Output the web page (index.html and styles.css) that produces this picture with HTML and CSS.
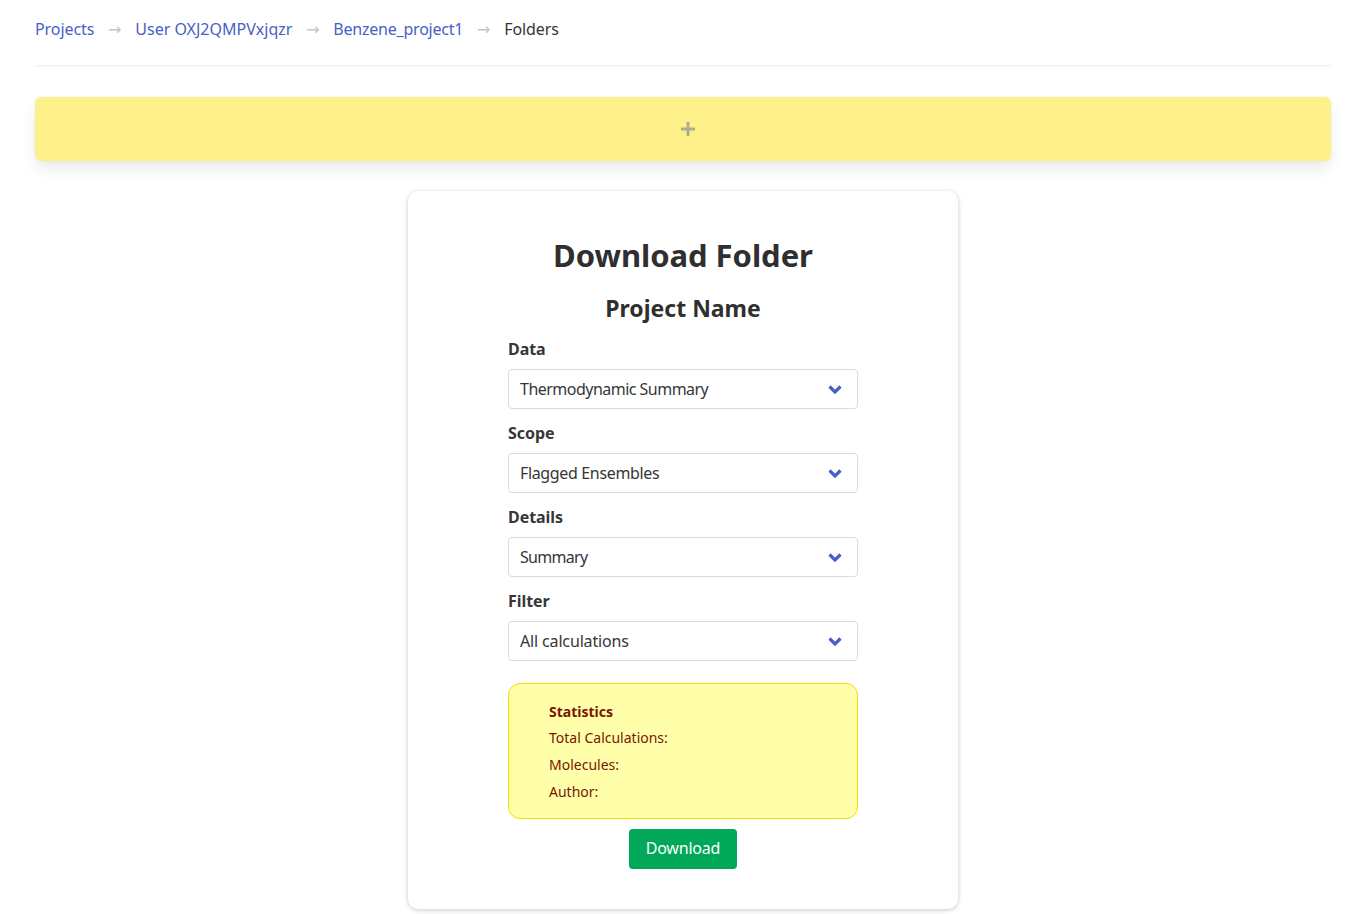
FILE: index.html
```html
<!DOCTYPE html>
<html lang="en">
<head>
<meta charset="utf-8">
<title>Download Folder</title>
<link rel="stylesheet" href="styles.css">
</head>
<body>
<nav class="breadcrumb">
  <a href="#" class="snug">Projects</a><span class="sep">→</span>
  <a href="#">User OXJ2QMPVxjqzr</a><span class="sep">→</span>
  <a href="#" class="tight">Benzene_project1</a><span class="sep">→</span>
  <span class="current">Folders</span>
</nav>
<hr class="rule">
<div class="add-bar">
  <svg class="plus" viewBox="0 0 14 14" width="14" height="14" aria-hidden="true"><path d="M5.6 0h2.8v5.6H14v2.8H8.4V14H5.6V8.4H0V5.6h5.6z"/></svg>
</div>
<main class="card">
  <h1>Download Folder</h1>
  <h2>Project Name</h2>
  <form class="form">
    <label class="label" for="d">Data</label>
    <div class="select"><select id="d" class="fit-a"><option>Thermodynamic Summary</option></select><svg class="chev" viewBox="0 0 14 9" width="14" height="9" aria-hidden="true"><path d="M1.5 1.5 7 7l5.5-5.5"/></svg></div>
    <label class="label" for="s">Scope</label>
    <div class="select"><select id="s" class="fit-b"><option>Flagged Ensembles</option></select><svg class="chev" viewBox="0 0 14 9" width="14" height="9" aria-hidden="true"><path d="M1.5 1.5 7 7l5.5-5.5"/></svg></div>
    <label class="label" for="t">Details</label>
    <div class="select"><select id="t" class="fit-c"><option>Summary</option></select><svg class="chev" viewBox="0 0 14 9" width="14" height="9" aria-hidden="true"><path d="M1.5 1.5 7 7l5.5-5.5"/></svg></div>
    <label class="label" for="f">Filter</label>
    <div class="select"><select id="f" class="fit-d"><option>All calculations</option></select><svg class="chev" viewBox="0 0 14 9" width="14" height="9" aria-hidden="true"><path d="M1.5 1.5 7 7l5.5-5.5"/></svg></div>
    <div class="stats">
      <p class="stats-title">Statistics</p>
      <p>Total Calculations:</p>
      <p>Molecules:</p>
      <p>Author:</p>
    </div>
    <button type="button" class="btn">Download</button>
  </form>
</main>
</body>
</html>
```
FILE: styles.css
```css
* { box-sizing: border-box; }
html, body { margin: 0; }
body {
  padding: 17px 28px 0 35px;
  font-family: "Noto Sans", "Open Sans", sans-serif;
  font-size: 16px;
  line-height: 24px;
  color: #363636;
  background: #fff;
  height: 914px;
  overflow: hidden;
}
.breadcrumb { display: flex; align-items: center; height: 24px; }
.breadcrumb a { color: #485fc7; text-decoration: none; }
.breadcrumb .snug { letter-spacing: -.08px; }
.breadcrumb .tight { letter-spacing: -.22px; }
.sep { color: #c4c4c4; width: 41px; padding-top: 1px; text-align: center; font-family: "DejaVu Sans", sans-serif; font-size: 16px; }
.current { color: #363636; letter-spacing: -.1px; }
.rule { height: 2px; margin: 24px 0 30px; border: 0; background: #f5f5f5; }
.add-bar {
  display: flex; align-items: center; justify-content: center;
  height: 64px; padding-left: 10px;
  background: #fef08a;
  border-radius: 6px;
  box-shadow: 0 8px 16px -2px rgba(10,10,10,.1), 0 0 0 1px rgba(10,10,10,.02);
}
.plus { fill: #b0ab88; }
.card {
  width: 550px; height: 718px;
  margin: 30px auto 0;
  padding: 46px 100px 40px;
  background: #fff;
  border-radius: 10px;
  box-shadow: 0 1px 5px rgba(10,10,10,.22);
}
h1, h2 { margin: 0; text-align: center; font-weight: 700; color: #2f2f2f; }
h1 { font-size: 31px; line-height: 36px; letter-spacing: -.05px; }
h2 { font-size: 23px; line-height: 30px; margin-top: 20px; }
.form { display: flex; flex-direction: column; margin-top: 14px; }
.label { display: block; font-weight: 700; margin-bottom: 8px; letter-spacing: -.05px; }
.select { position: relative; height: 40px; margin-bottom: 12px; }
.chev {
  position: absolute; top: 16px; right: 16px;
  fill: none; stroke: #485fc7; stroke-width: 3.2;
  pointer-events: none;
}
.select select {
  appearance: none; width: 100%; height: 40px;
  padding: 0 40px 0 11px;
  font: inherit; color: #363636;
  background: #fff;
  border: 1px solid #dbdbdb; border-radius: 4px;
}
.select .fit-a { letter-spacing: -.52px; }
.select .fit-b { letter-spacing: -.35px; }
.select .fit-c { letter-spacing: -.7px; }
.select .fit-d { letter-spacing: -.15px; }
.stats {
  height: 136px; margin-top: 10px;
  padding: 15px 40px;
  background: #ffffaa;
  border: 1px solid #f0e000;
  border-radius: 12px;
  color: #7a1500;
  font-size: 14px;
  line-height: 27px;
}
.stats p { margin: 0; }
.stats-title { font-weight: 700; line-height: 25px; }
.btn {
  align-self: center;
  width: 108px; height: 40px; margin-top: 10px; padding: 0 0 2px;
  font: inherit; color: #fff;
  letter-spacing: -.2px;
  background: #00a857;
  border: 0; border-radius: 4px;
}
```
